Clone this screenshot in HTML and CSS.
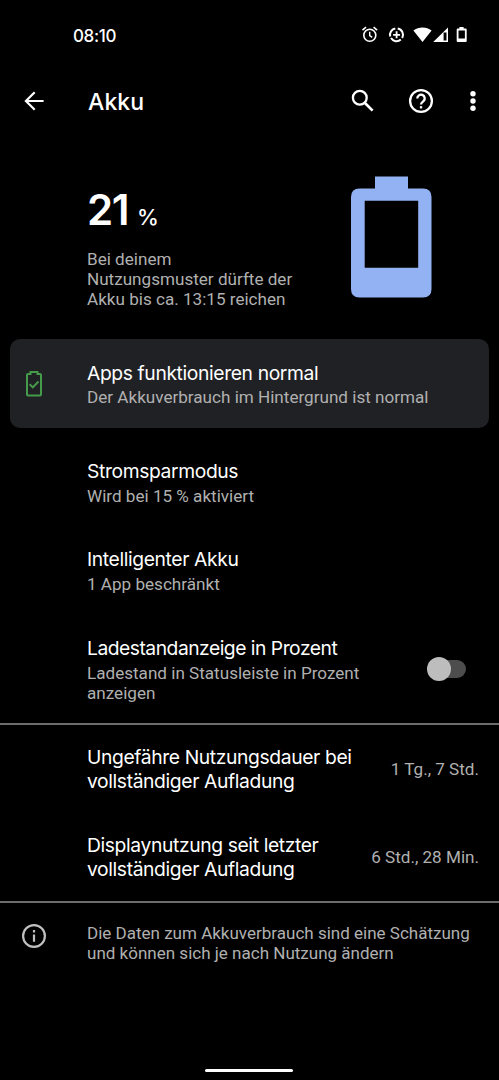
FILE: index.html
```html
<!DOCTYPE html>
<html lang="de">
<head>
<meta charset="utf-8">
<title>Akku</title>
<link rel="stylesheet" href="styles.css">
</head>
<body>
<div class="screen">
  <header class="status">
    <span class="clock">08:10</span>
    <svg class="status-icons" width="108" height="20" viewBox="0 0 108 20" fill="none" stroke="#fff">
      <circle cx="9.8" cy="10.3" r="6" stroke-width="1.6"/>
      <path d="M9.7 6.8v3.8l2.5 1.7" stroke-width="1.4"/>
      <path d="M2.5 5.2l3.5-3M17.1 5.2l-3.5-3" stroke-width="1.6"/>
      <path d="M37.7 3.5A6.4 6.4 0 0 1 42.2 12.9M40.8 14.6A6.4 6.4 0 0 1 31 13.1M30.2 11.4A6.4 6.4 0 0 1 35.3 3.5" stroke-width="2"/>
      <path d="M33.1 9.8h7M36.6 6.3v7" stroke-width="1.8"/>
      <path d="M53.4 5.6C58.6 1.5 66.4 1.5 71.6 5.6L62.5 17Z" fill="#fff" stroke="none"/>
      <path d="M88 2.6V17H73.2ZM86.5 7.5h-2.9V15.5h2.9Z" fill="#fff" stroke="none" fill-rule="evenodd"/>
      <path d="M99.4 2h4.2v1.6h2.1q1 0 1 1V16q0 1-1 1h-8q-1 0-1-1V4.600q0-1 1-1h1.700ZM98.500 5.400v8.200h6.400V5.400Z" fill="#fff" stroke="none" fill-rule="evenodd"/>
    </svg>
  </header>

  <nav class="appbar">
    <svg class="back" width="24" height="24" viewBox="0 0 24 24" fill="none" stroke="#fff" stroke-width="2.2"><path d="M22.600 12H4.500M13.700 3.200L4.900 12l8.800 8.800"/></svg>
    <h1>Akku</h1>
    <svg width="26" height="26" viewBox="0 0 26 26" fill="none" stroke="#fff"><circle cx="9.800" cy="9.800" r="6.900" stroke-width="2.300"/><path d="M14.700 14.700l7.900 7.900" stroke-width="2.700"/></svg>
    <svg class="help" width="26" height="26" viewBox="0 0 26 26" fill="none" stroke="#fff" stroke-width="2.300"><circle cx="13" cy="13" r="10.900"/><path d="M9.300 10.400a3.700 3.700 0 1 1 6.400 2.500C14.300 14.100 13 14.600 13 16.600"/><path d="M11.900 19.300h2.300"/></svg>
    <svg class="more" width="8" height="24" viewBox="0 0 8 24" fill="#fff"><circle cx="4" cy="4.800" r="2.700"/><circle cx="4" cy="12" r="2.700"/><circle cx="4" cy="19.200" r="2.700"/></svg>
  </nav>

  <section class="summary">
    <div>
      <div class="percent"><span class="value">21</span><span class="unit">%</span></div>
      <p class="estimate">Bei deinem<br>Nutzungsmuster dürfte der<br>Akku bis ca. 13:15 reichen</p>
    </div>
    <svg class="battery" width="82" height="122" viewBox="0 0 82 122"><path fill="#92b2f4" fill-rule="evenodd" d="M24 .500h33v12h15q8.500 0 8.500 8.500v92q0 8.500-8.500 8.500h-63.500q-8.500 0-8.500-8.500V21q0-8.500 8.500-8.500H24ZM13.700 24.700v67h53.500v-67Z"/></svg>
  </section>

  <section class="tip">
    <svg class="tip-icon" width="18" height="28" viewBox="0 0 18 28" fill="none" stroke="#459b49" stroke-width="2"><path d="M5.500 4V2h7v2H15q1 0 1 1v19.400q0 1-1 1H3q-1 0-1-1V5q0-1 1-1Z"/><path d="M4.700 14.300l3.100 3.100 5.700-5.900"/></svg>
    <div><h2>Apps funktionieren normal</h2><p>Der Akkuverbrauch im Hintergrund ist normal</p></div>
  </section>

  <section class="group">
    <div class="row"><div><h2>Stromsparmodus</h2><p>Wird bei 15 % aktiviert</p></div></div>
    <div class="row"><div><h2>Intelligenter Akku</h2><p>1 App beschränkt</p></div></div>
    <div class="row tall">
      <div><h2 class="tight">Ladestandanzeige in Prozent</h2><p>Ladestand in Statusleiste in Prozent<br>anzeigen</p></div>
      <span class="switch"><span class="thumb"></span></span>
    </div>
  </section>

  <section class="group stats">
    <div class="row"><h2>Ungefähre Nutzungsdauer bei<br>vollständiger Aufladung</h2><p>1 Tg., 7 Std.</p></div>
    <div class="row"><h2>Displaynutzung seit letzter<br>vollständiger Aufladung</h2><p>6 Std., 28 Min.</p></div>
  </section>

  <footer class="note">
    <svg width="26" height="26" viewBox="0 0 26 26" fill="none" stroke="#c0c0c0" stroke-width="2.200"><circle cx="13" cy="13" r="10.900"/><path d="M13 11.500v7.300M13 7.100v2.300"/></svg>
    <p>Die Daten zum Akkuverbrauch sind eine Schätzung<br>und können sich je nach Nutzung ändern</p>
  </footer>
  <div class="gesture"></div>
</div>
</body>
</html>
```

FILE: styles.css
```css
* { box-sizing: border-box; }
body { margin: 0; background: #000; color: #fff; font-family: Roboto, sans-serif; }
h1, h2, p { margin: 0; }
svg { display: block; flex: none; }
.screen { display: flex; flex-direction: column; width: 499px; height: 1080px; overflow: hidden; }
.status { display: flex; justify-content: space-between; align-items: center; height: 67px; padding: 4px 31px 0 73px; }
.clock { font: 500 17px/20px Inter, sans-serif; letter-spacing: -.35px; }
.status-icons { margin-bottom: 1px; }
.appbar { display: flex; align-items: center; height: 67px; padding: 0 22px 0 21px; }
.appbar h1 { flex: 1; margin-left: 43px; padding-top: 2px; font: 500 23px/30px Inter, sans-serif; letter-spacing: .1px; }
.help { margin-left: 32px; }
.more { margin-left: 35px; }
.summary { display: flex; justify-content: space-between; height: 205px; padding: 42px 67px 0 87px; }
.percent { display: flex; align-items: baseline; gap: 9px; height: 69px; padding-top: 7px; font-family: Inter, sans-serif; line-height: 54px; }
.value { font-size: 42px; font-weight: 600; letter-spacing: -1.5px; }
.unit { font-size: 22px; font-weight: 500; }
.battery { margin-right: -1px; }
.estimate { padding-top: 4px; }
p { color: #b0b0b0; font-size: 17.1px; line-height: 20px; white-space: nowrap; }
h2 { font: 400 19.3px/24px Inter, sans-serif; letter-spacing: -.38px; white-space: nowrap; }
.tight { letter-spacing: -.5px; }
h2 + p { margin-top: 2px; }
.group h2 + p { margin-top: 3px; }
.tip { display: flex; align-items: center; gap: 44px; height: 89px; margin: 0 10px 10px; padding-left: 15px; border-radius: 10px; background: #202124; }
.row { display: flex; align-items: center; justify-content: space-between; height: 88.5px; padding: 0 33px 0 87px; }
.row.tall { height: 108px; }
.group { border-bottom: 2px solid #6c6d6e; }
.stats .row { padding-right: 20px; }
.group.stats h2 + p { margin-top: 0; }
.stats .row:last-child { height: 87.5px; }
.switch { display: flex; align-items: center; width: 36px; height: 18px; border-radius: 9px; background: #4d4d4d; }
.thumb { flex: none; width: 24px; height: 24px; margin-left: -3px; border-radius: 50%; background: #bdbdbd; }
.note { display: flex; align-items: flex-start; gap: 40px; padding: 20px 0 0 21px; }
.note p { font-size: 17.03px; }
.gesture { width: 88px; height: 3px; margin: auto auto 8px 205px; border-radius: 2px; background: #fff; }
```
